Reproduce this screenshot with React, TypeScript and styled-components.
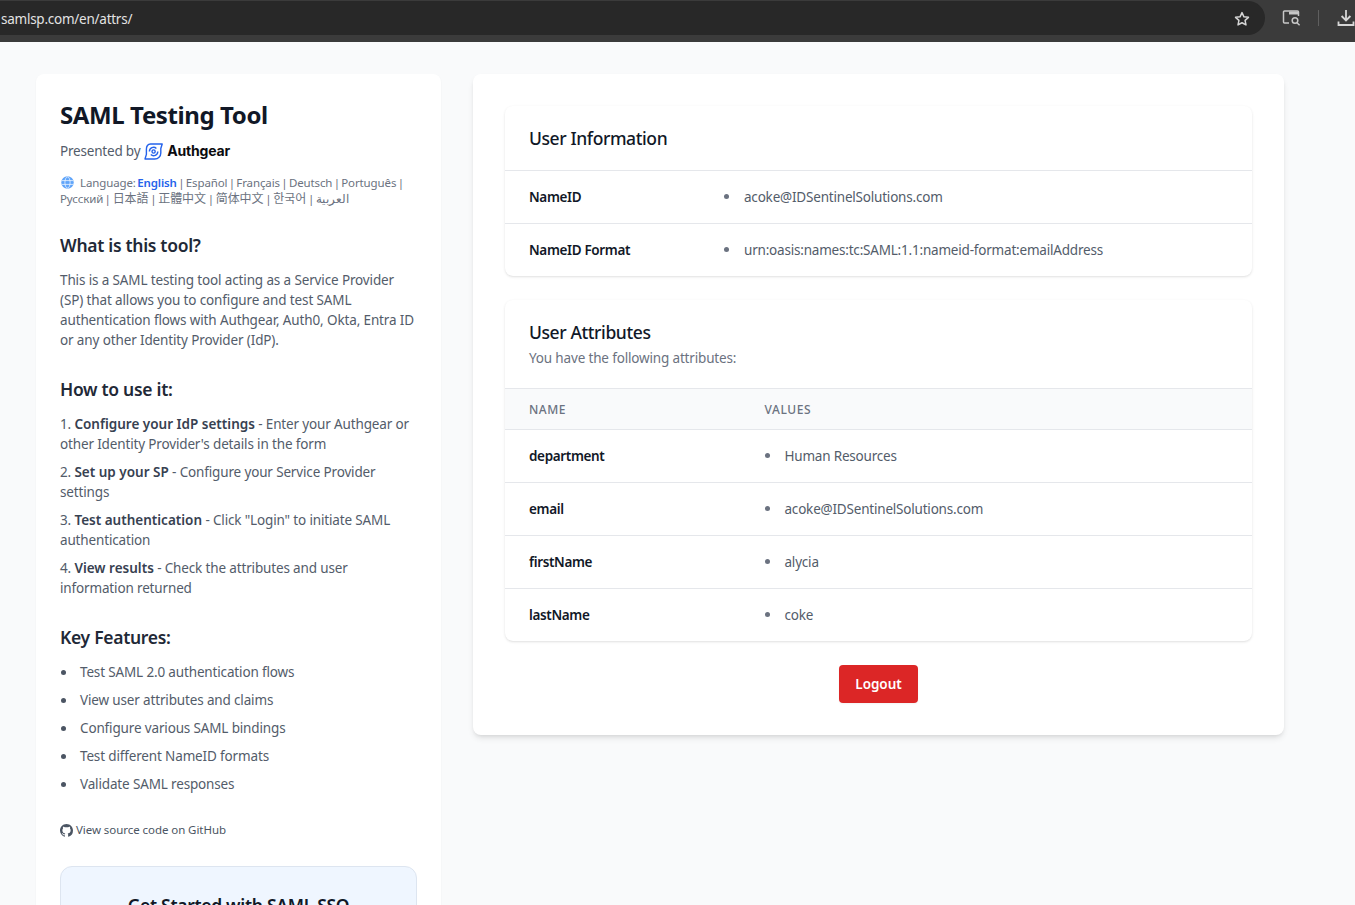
import React from 'react'
import styled, { createGlobalStyle } from 'styled-components'

const GlobalStyle = createGlobalStyle`
  html, body {
    margin: 0;
    height: 905px;
    overflow: hidden;
    background: #f9fafb;
  }
  * { box-sizing: border-box; }
  body {
    font-family: "Noto Sans", "Noto Sans CJK SC", sans-serif;
    color: #535c6a;
  }
`

const BrowserBar = styled.div`
  height: 42px;
  background: #3b3b3b;
  display: flex;
  align-items: flex-start;
  padding-top: 1px;
`

const Omnibox = styled.div`
  width: 1266px;
  height: 34px;
  background: #282828;
  border-radius: 0 17px 17px 0;
  display: flex;
  align-items: center;
  justify-content: space-between;
  padding: 1px 14px 0 1px;
  color: #e3e3e3;
  font-size: 13.5px;
  letter-spacing: -0.25px;
`

const BrowserTools = styled.div`
  flex: 1;
  height: 34px;
  display: flex;
  align-items: center;
  padding-left: 17px;
  color: #c7c7c7;
`

const ToolDivider = styled.div`
  width: 1px;
  height: 16px;
  background: #5f5f5f;
  margin: 0 18px 0 16px;
`

const Page = styled.main`
  display: flex;
  align-items: flex-start;
  gap: 32px;
  padding: 32px 0 0 36px;
`

const Sidebar = styled.aside`
  width: 405px;
  flex: none;
  background: #fff;
  border-radius: 8px;
  box-shadow: 0 1px 2px rgba(0, 0, 0, 0.05);
  padding: 23px 24px 40px;
`

const Title = styled.h1`
  margin: 0;
  font-size: 24px;
  line-height: 36px;
  font-weight: 700;
  color: #111827;
  letter-spacing: -0.4px;
`

const Presented = styled.div`
  margin-top: 8px;
  display: flex;
  align-items: center;
  font-size: 13.5px;
  line-height: 20px;
  letter-spacing: -0.2px;
`

const LogoMark = styled.svg`
  margin: 0 4px 0 4px;
`

const Brand = styled.span`
  font-family: Inter, sans-serif;
  font-weight: 700;
  font-size: 14px;
  color: #0b0b0f;
`

const Language = styled.div`
  margin-top: 14px;
  margin-bottom: -1px;
  font-size: 11.5px;
  line-height: 16px;
  color: #6b7280;
  letter-spacing: -0.12px;
  word-spacing: -1.5px;
`

const Globe = styled.span`
  display: inline-block;
  width: 13px;
  height: 13px;
  margin: 0 6px 0 1px;
  vertical-align: -2px;
  line-height: 0;
`

const LangLink = styled.a<{ $cjk?: boolean }>`
  color: inherit;
  text-decoration: none;
  font-size: ${({ $cjk }) => ($cjk ? '12px' : 'inherit')};
  margin: ${({ $cjk }) => ($cjk ? '0 0.5px' : '0')};
`

const ActiveLang = styled.a`
  color: #2563eb;
  font-weight: 600;
  text-decoration: none;
`

const SectionTitle = styled.h2`
  margin: 25px 0 11px;
  font-size: 17.5px;
  line-height: 28px;
  font-weight: 600;
  color: #1f2937;
  letter-spacing: -0.3px;
`

const Paragraph = styled.p`
  margin: 0;
  font-size: 13.5px;
  line-height: 20px;
  letter-spacing: -0.13px;
`

const Steps = styled.ol`
  margin: 0;
  padding: 0;
  list-style: none;
  display: flex;
  flex-direction: column;
  gap: 8px;
  font-size: 13.5px;
  line-height: 20px;
  letter-spacing: -0.15px;

  strong {
    font-weight: 600;
    color: #374151;
    letter-spacing: 0;
  }
`

const Features = styled.ul`
  margin: 0;
  padding: 0;
  list-style: none;
  display: flex;
  flex-direction: column;
  gap: 8px;
  font-size: 13.5px;
  line-height: 20px;
  letter-spacing: -0.15px;
`

const Feature = styled.li`
  display: flex;
  align-items: center;
  padding-left: 1px;

  &::before {
    content: '';
    width: 5px;
    height: 5px;
    border-radius: 50%;
    background: #4b5563;
    margin-right: 14px;
  }
`

const SourceLink = styled.a`
  margin-top: 28px;
  display: flex;
  align-items: center;
  gap: 3px;
  font-size: 11.5px;
  line-height: 16px;
  color: #4b5563;
  letter-spacing: -0.06px;
`

const CtaBox = styled.div`
  margin-top: 28px;
  height: 200px;
  background: #eff6ff;
  border: 1px solid #dde5f0;
  border-radius: 12px;
  padding-top: 24px;
  text-align: center;
  font-size: 17.5px;
  line-height: 28px;
  font-weight: 600;
  color: #111827;
  letter-spacing: -0.3px;
`

const Content = styled.section`
  width: 811px;
  flex: none;
  background: #fff;
  border-radius: 8px;
  box-shadow: 0 4px 6px -1px rgba(0, 0, 0, 0.1), 0 2px 4px -2px rgba(0, 0, 0, 0.1);
  padding: 32px;
  display: flex;
  flex-direction: column;
  gap: 24px;
`

const InfoCard = styled.div`
  background: #fff;
  border-radius: 8px;
  box-shadow: 0 1px 3px rgba(0, 0, 0, 0.1), 0 1px 2px -1px rgba(0, 0, 0, 0.1);
  overflow: hidden;
`

const CardHeader = styled.div`
  padding: 20px 24px;
  border-bottom: 1px solid #e5e7eb;
`

const CardTitle = styled.h3`
  margin: 0;
  font-size: 17.5px;
  line-height: 24px;
  height: 24px;
  font-weight: 500;
  color: #111827;
  letter-spacing: -0.4px;
`

const CardSubtitle = styled.p`
  margin: 4px 0 0;
  font-size: 13.5px;
  line-height: 20px;
  color: #6b7280;
  letter-spacing: -0.16px;
`

const Row = styled.div<{ $nameWidth: number }>`
  display: grid;
  grid-template-columns: ${({ $nameWidth }) => $nameWidth}px 1fr;
  align-items: center;
  height: 53px;
  padding: 0 24px 1px;
  font-size: 13.5px;
  border-bottom: 1px solid #e5e7eb;

  &:last-child {
    height: 52px;
    border-bottom: none;
  }
`

const RowName = styled.div`
  font-weight: 600;
  color: #111827;
  letter-spacing: -0.35px;
`

const RowValue = styled.div`
  display: flex;
  align-items: center;
  color: #535c6a;
  letter-spacing: -0.2px;

  &::before {
    content: '';
    width: 5px;
    height: 5px;
    border-radius: 50%;
    background: #6b7280;
    margin-right: 15px;
  }
`

const TableHead = styled.div`
  display: grid;
  grid-template-columns: 235.5px 1fr;
  align-items: center;
  height: 41px;
  padding: 0 24px;
  background: #f9fafb;
  border-bottom: 1px solid #e5e7eb;
  font-size: 12px;
  font-weight: 500;
  color: #6b7280;
  letter-spacing: 0.56px;
  text-transform: uppercase;
`

const Actions = styled.div`
  display: flex;
  justify-content: center;
`

const LogoutButton = styled.button`
  width: 79px;
  height: 38px;
  padding: 0 0 1px;
  border: none;
  border-radius: 4px;
  background: #dc2626;
  color: #fff;
  font-family: inherit;
  font-size: 13.5px;
  font-weight: 600;
  letter-spacing: -0.05px;
  box-shadow: 0 1px 2px rgba(0, 0, 0, 0.05);
`

const languages = [
  { label: 'Español' },
  { label: 'Français' },
  { label: 'Deutsch' },
  { label: 'Português' },
  { label: 'Русский' },
  { label: '日本語', cjk: true },
  { label: '正體中文', cjk: true },
  { label: '简体中文', cjk: true },
  { label: '한국어', cjk: true },
  { label: 'العربية' },
]

const steps = [
  { title: 'Configure your IdP settings', text: "Enter your Authgear or other Identity Provider's details in the form" },
  { title: 'Set up your SP', text: 'Configure your Service Provider settings' },
  { title: 'Test authentication', text: 'Click "Login" to initiate SAML authentication' },
  { title: 'View results', text: 'Check the attributes and user information returned' },
]

const features = [
  'Test SAML 2.0 authentication flows',
  'View user attributes and claims',
  'Configure various SAML bindings',
  'Test different NameID formats',
  'Validate SAML responses',
]

const attributes = [
  { name: 'department', value: 'Human Resources' },
  { name: 'email', value: 'acoke@IDSentinelSolutions.com' },
  { name: 'firstName', value: 'alycia' },
  { name: 'lastName', value: 'coke' },
]

const AuthgearLogo = () => (
  <LogoMark width="19" height="17" viewBox="0 0 19 17" fill="none" stroke="#2563eb" strokeWidth="1.4">
    <path d="M6.5 1H18.2l-1.4 4.5V10c0 3.4-2.6 6-6 6H1l1.4-4.6V6.2C2.4 3.2 3.8 1 6.5 1z" strokeLinejoin="round" />
    <circle cx="9.6" cy="8.5" r="1.6" />
    <path d="M5.4 8.5a4.2 4.2 0 0 1 7-3.1M13.8 8.5a4.2 4.2 0 0 1-7 3.1" />
  </LogoMark>
)

const App: React.FC = () => {
  return (
    <>
      <GlobalStyle />
      <BrowserBar>
        <Omnibox>
          samlsp.com/en/attrs/
          <svg width="18" height="18" viewBox="0 0 24 24" fill="none" stroke="#d6d6d6" strokeWidth="2" strokeLinejoin="round">
            <path d="M12 3.5l2.6 5.6 6 .7-4.5 4.1 1.2 6L12 17l-5.3 2.9 1.2-6-4.5-4.1 6-.7z" />
          </svg>
        </Omnibox>
        <BrowserTools>
          <svg width="20" height="18" viewBox="0 0 20 18" fill="none" stroke="#c7c7c7" strokeWidth="1.5">
            <path d="M7 14H2.5A1 1 0 0 1 1.5 13V3a1 1 0 0 1 1-1h13a1 1 0 0 1 1 1v4" />
            <path d="M7 2.5h9v3H7z" fill="#c7c7c7" stroke="none" />
            <circle cx="13" cy="11.5" r="2.8" />
            <path d="M15 13.7l2.6 2.6" />
          </svg>
          <ToolDivider />
          <svg width="18" height="18" viewBox="0 0 18 18" fill="none" stroke="#d6d6d6" strokeWidth="1.8">
            <path d="M9 1v10M4.6 7L9 11.4 13.4 7M1.5 12.5v3.5h15v-3.5" />
          </svg>
        </BrowserTools>
      </BrowserBar>
      <Page>
        <Sidebar>
          <Title>SAML Testing Tool</Title>
          <Presented>
            Presented by <AuthgearLogo /> <Brand>Authgear</Brand>
          </Presented>
          <Language>
            <Globe>
              <svg width="13" height="13" viewBox="0 0 13 13" fill="none" stroke="#fff" strokeWidth="0.7">
                <circle cx="6.5" cy="6.5" r="6.2" fill="#60a5fa" stroke="none" />
                <ellipse cx="6.5" cy="6.5" rx="2.6" ry="5.6" />
                <path d="M1 4.6h11M1 8.4h11" />
              </svg>
            </Globe>
            Language: <ActiveLang href="#">English</ActiveLang>
            {languages.map((lang) => (
              <React.Fragment key={lang.label}>
                {' | '}
                <LangLink href="#" $cjk={lang.cjk}>{lang.label}</LangLink>
              </React.Fragment>
            ))}
          </Language>

          <SectionTitle>What is this tool?</SectionTitle>
          <Paragraph>
            This is a SAML testing tool acting as a Service Provider (SP) that allows you to configure and test SAML
            authentication flows with Authgear, Auth0, Okta, Entra ID or any other Identity Provider (IdP).
          </Paragraph>

          <SectionTitle>How to use it:</SectionTitle>
          <Steps>
            {steps.map((step, index) => (
              <li key={step.title}>
                {index + 1}. <strong>{step.title}</strong> - {step.text}
              </li>
            ))}
          </Steps>

          <SectionTitle>Key Features:</SectionTitle>
          <Features>
            {features.map((feature) => (
              <Feature key={feature}>{feature}</Feature>
            ))}
          </Features>

          <SourceLink>
            <svg width="13" height="13" viewBox="0 0 16 16" fill="#4b5563">
              <path d="M8 0C3.58 0 0 3.58 0 8c0 3.54 2.29 6.53 5.47 7.59.4.07.55-.17.55-.38 0-.19-.01-.82-.01-1.49-2.01.37-2.53-.49-2.69-.94-.09-.23-.48-.94-.82-1.13-.28-.15-.68-.52-.01-.53.63-.01 1.08.58 1.23.82.72 1.21 1.87.87 2.33.66.07-.52.28-.87.51-1.07-1.78-.2-3.64-.89-3.64-3.95 0-.87.31-1.59.82-2.15-.08-.2-.36-1.02.08-2.12 0 0 .67-.21 2.2.82.64-.18 1.32-.27 2-.27s1.36.09 2 .27c1.53-1.04 2.2-.82 2.2-.82.44 1.1.16 1.92.08 2.12.51.56.82 1.27.82 2.15 0 3.07-1.87 3.75-3.65 3.95.29.25.54.73.54 1.48 0 1.07-.01 1.93-.01 2.2 0 .21.15.46.55.38A8.01 8.01 0 0 0 16 8c0-4.42-3.58-8-8-8z" />
            </svg>
            View source code on GitHub
          </SourceLink>

          <CtaBox>Get Started with SAML SSO</CtaBox>
        </Sidebar>

        <Content>
          <InfoCard>
            <CardHeader>
              <CardTitle>User Information</CardTitle>
            </CardHeader>
            <Row $nameWidth={195}>
              <RowName>NameID</RowName>
              <RowValue>acoke@IDSentinelSolutions.com</RowValue>
            </Row>
            <Row $nameWidth={195}>
              <RowName>NameID Format</RowName>
              <RowValue>urn:oasis:names:tc:SAML:1.1:nameid-format:emailAddress</RowValue>
            </Row>
          </InfoCard>

          <InfoCard>
            <CardHeader>
              <CardTitle>User Attributes</CardTitle>
              <CardSubtitle>You have the following attributes:</CardSubtitle>
            </CardHeader>
            <TableHead>
              <span>Name</span>
              <span>Values</span>
            </TableHead>
            {attributes.map((attr) => (
              <Row $nameWidth={235.5} key={attr.name}>
                <RowName>{attr.name}</RowName>
                <RowValue>{attr.value}</RowValue>
              </Row>
            ))}
          </InfoCard>

          <Actions>
            <LogoutButton>Logout</LogoutButton>
          </Actions>
        </Content>
      </Page>
    </>
  )
}

export default App
